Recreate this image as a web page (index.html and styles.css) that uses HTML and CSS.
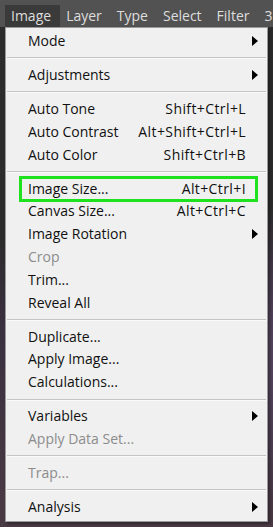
FILE: index.html
```html
<!DOCTYPE html>
<html lang="en">
<head>
  <meta charset="UTF-8" />
  <meta name="viewport" content="width=device-width, initial-scale=1.0"/>
  <title>Image Menu</title>
  <link rel="stylesheet" href="styles.css">
</head>
<body>
  <div class="menubar">
    <span class="bar-item open">Image</span>
    <span class="bar-item">Layer</span>
    <span class="bar-item">Type</span>
    <span class="bar-item">Select</span>
    <span class="bar-item">Filter</span>
    <span class="bar-item last">3</span>
  </div>

  <div class="stage">
    <div class="menu">
      <div class="item sub">Mode</div>
      <div class="sep"></div>
      <div class="item sub">Adjustments</div>
      <div class="sep"></div>
      <div class="item">Auto Tone<span class="key">Shift+Ctrl+L</span></div>
      <div class="item">Auto Contrast<span class="key">Alt+Shift+Ctrl+L</span></div>
      <div class="item">Auto Color<span class="key">Shift+Ctrl+B</span></div>
      <div class="sep"></div>
      <div class="item marked">Image Size...<span class="key">Alt+Ctrl+I</span></div>
      <div class="item">Canvas Size...<span class="key">Alt+Ctrl+C</span></div>
      <div class="item sub">Image Rotation</div>
      <div class="item disabled">Crop</div>
      <div class="item">Trim...</div>
      <div class="item">Reveal All</div>
      <div class="sep"></div>
      <div class="item">Duplicate...</div>
      <div class="item">Apply Image...</div>
      <div class="item">Calculations...</div>
      <div class="sep"></div>
      <div class="item sub">Variables</div>
      <div class="item disabled">Apply Data Set...</div>
      <div class="sep"></div>
      <div class="item disabled">Trap...</div>
      <div class="sep"></div>
      <div class="item sub">Analysis</div>
    </div>
  </div>
</body>
</html>
```

FILE: styles.css
```css
html, body {
  margin: 0;
  padding: 0;
}

body {
  width: 273px;
  height: 527px;
  overflow: hidden;
  background-color: #2c2c2c;
  font-family: 'Open Sans', 'Noto Sans', sans-serif;
}

.menubar {
  height: 27px;
  background-color: #525252;
  display: flex;
  align-items: flex-end;
  padding-left: 5px;
  white-space: nowrap;
  overflow: hidden;
}

.bar-item {
  color: #dedede;
  font-size: 14px;
  height: 22px;
  line-height: 21px;
  padding: 0 7px 0 6px;
  margin-right: 2px;
}

.bar-item.open {
  background-color: #3a3a3a;
  padding-right: 9px;
  margin-right: 0;
}

.bar-item.last {
  padding-right: 0;
  margin-right: 0;
}

.stage {
  height: 500px;
  padding-left: 5px;
  background:
    radial-gradient(ellipse 80px 160px at 290px 330px, #5b4a66 0%, rgba(70, 55, 80, 0) 100%),
    linear-gradient(180deg, #2c2c2c 0px, #2c2c2c 210px, #3a3040 300px, #4a3a44 500px);
}

.menu {
  width: 261px;
  background-color: #f0f0f0;
  border: 1px solid #9a9a9a;
  padding: 2px 0 2px;
  box-shadow: 2px 2px 3px rgba(0, 0, 0, 0.35);
}

.item {
  position: relative;
  height: 22.8px;
  line-height: 22.8px;
  padding: 0 21px 0 22px;
  display: flex;
  justify-content: space-between;
  font-size: 14px;
  color: #111;
  white-space: nowrap;
}

.key {
  letter-spacing: 0.4px;
}

.item.disabled {
  color: #8c8c8c;
}

.item.sub::after {
  content: "";
  position: absolute;
  right: 9px;
  top: 6px;
  border-left: 6px solid #000;
  border-top: 5px solid transparent;
  border-bottom: 5px solid transparent;
}

/* green annotation box round Image Size */
.item.marked::before {
  content: "";
  position: absolute;
  left: 13px;
  right: 9px;
  top: -2px;
  bottom: -2px;
  border: 3px solid #1fe21f;
}

.sep {
  height: 0;
  margin: 4.6px 1px;
  border-top: 1px solid #c4c4c4;
  border-bottom: 1px solid #fafafa;
}
```
